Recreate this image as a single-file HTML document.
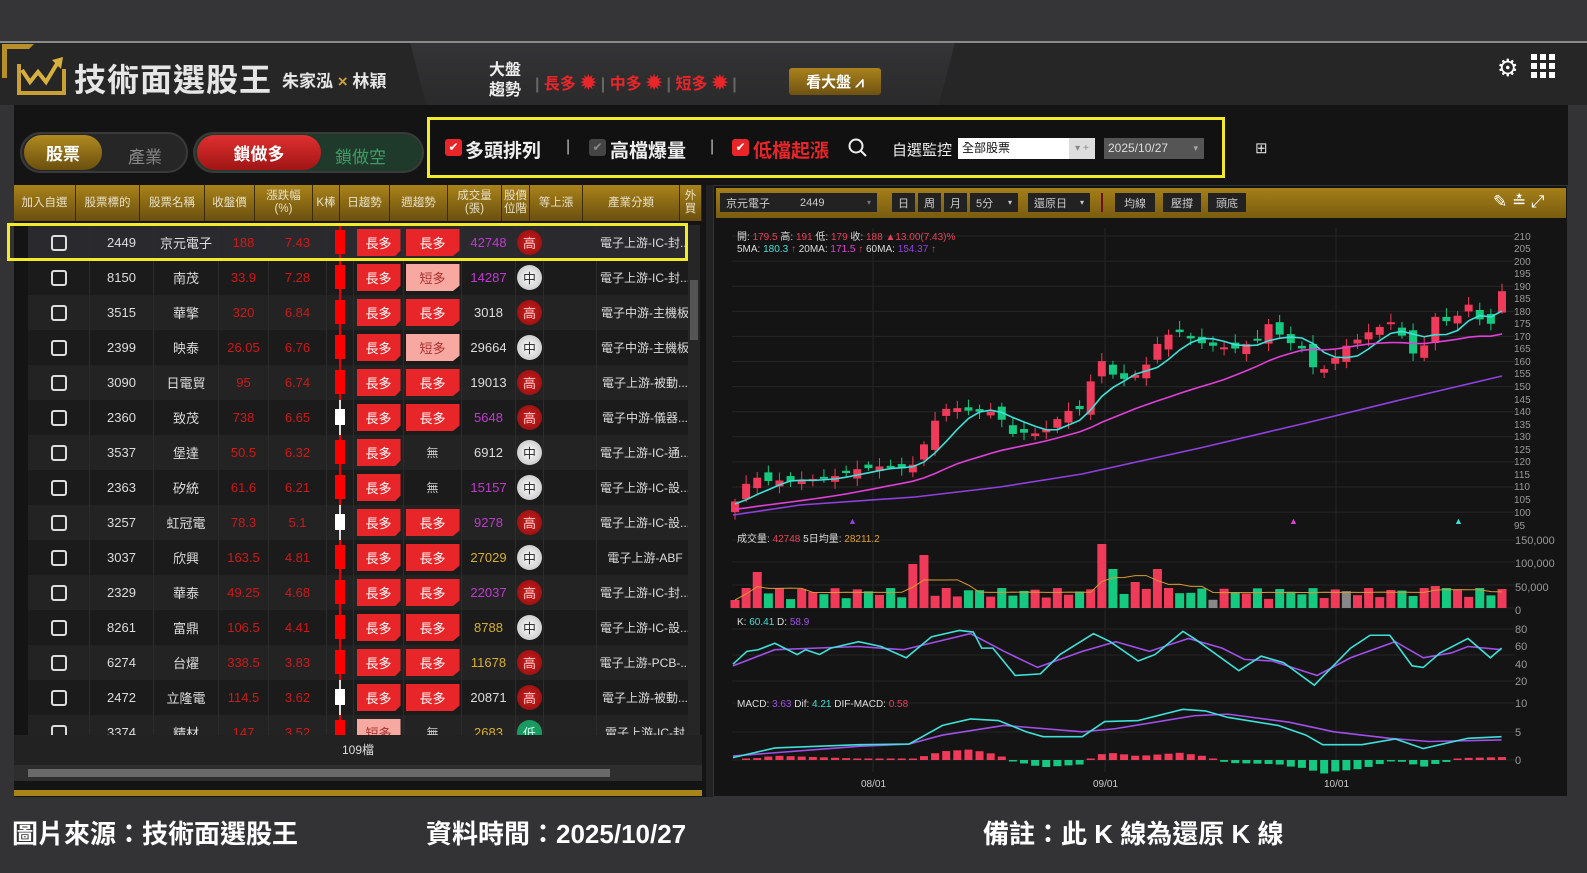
<!DOCTYPE html>
<html><head><meta charset="utf-8"><style>
*{margin:0;padding:0;box-sizing:border-box}
body{width:1587px;height:873px;overflow:hidden;background:#333335;font-family:"Liberation Sans","Noto Sans CJK TC",sans-serif;position:relative;color:#ddd}
.a{position:absolute}
.hc{position:absolute;top:185px;height:36px;background:linear-gradient(#a98218,#6a5010);color:#e8e0c8;font-size:11.5px;display:flex;align-items:center;justify-content:center;text-align:center;line-height:13px;border-right:1px solid #3a2c08}
.row{position:absolute;left:14px;width:674px;height:35px}
.c{position:absolute;top:0;height:35px;display:flex;align-items:center;justify-content:center;font-size:13px;border-right:1px solid #2c2c2c}
.tag{width:44px;height:27px;background:#e8262a;color:#fff;font-size:13px;display:flex;align-items:center;justify-content:center;clip-path:polygon(0 0,100% 0,100% 80%,88% 100%,0 100%)}
.pos{width:25px;height:25px;border-radius:50%;display:flex;align-items:center;justify-content:center;font-size:13px}
.btn{position:absolute;top:193px;height:19px;background:#222;color:#ccc;font-size:11px;display:flex;align-items:center;padding:0 6px}
</style></head><body>
<div class="a" style="left:0;top:0;width:1587px;height:42px;background:#353537"></div>
<div class="a" style="left:0;top:41px;width:1587px;height:2px;background:#8a8a8a"></div>
<div class="a" style="left:0;top:43px;width:1587px;height:62px;background:#262627"></div>
<div class="a" style="left:410px;top:43px;width:545px;height:62px;background:linear-gradient(#343436,#2a2a2b);clip-path:polygon(0 0,100% 0,97% 100%,3% 100%)"></div>
<svg class="a" style="left:0;top:42px" width="75" height="60" viewBox="0 0 75 60">
<path d="M2 36 V2 H34 L29 7 H7 V36 Z" fill="#b8902a"/>
<path d="M19 22 V51 H64 V27" fill="none" stroke="#c9a033" stroke-width="4"/>
<path d="M22 28 L30 40 L38 30 L46 40 L58 20" fill="none" stroke="#d8b040" stroke-width="4"/>
<path d="M52 18 L63 15 L61 27 Z" fill="#d8b040"/>
</svg>
<div class="a" style="left:74px;top:55px;font-size:32px;font-weight:bold;color:#e6e6e6;letter-spacing:1px">技術面選股王</div>
<div class="a" style="left:282px;top:67px;font-size:17px;font-weight:bold;color:#e6e6e6">朱家泓 <span style="color:#c9a033">×</span> 林穎</div>
<div class="a" style="left:489px;top:61px;font-size:16px;font-weight:bold;color:#eee;line-height:20px">大盤<br>趨勢</div>
<div class="a" style="left:535px;top:70px;font-size:16px;color:#e8262a;font-weight:bold;white-space:nowrap">
<span style="color:#666">|</span> 長多 <span style="font-size:19px">✹</span> <span style="color:#666">|</span> 中多 <span style="font-size:19px">✹</span> <span style="color:#666">|</span> 短多 <span style="font-size:19px">✹</span> <span style="color:#666">|</span></div>
<div class="a" style="left:789px;top:68px;width:92px;height:27px;background:linear-gradient(#a9821c,#6f5212);border-radius:3px;color:#fff;font-size:15px;font-weight:bold;display:flex;align-items:center;justify-content:center">看大盤 ⩘</div>
<div class="a" style="left:1497px;top:54px;font-size:24px;color:#fff">⚙</div>
<svg class="a" style="left:1531px;top:54px" width="24" height="24"><g fill="#fff"><rect x="0" y="0" width="6" height="6"/><rect x="9" y="0" width="6" height="6"/><rect x="18" y="0" width="6" height="6"/><rect x="0" y="9" width="6" height="6"/><rect x="9" y="9" width="6" height="6"/><rect x="18" y="9" width="6" height="6"/><rect x="0" y="18" width="6" height="6"/><rect x="9" y="18" width="6" height="6"/><rect x="18" y="18" width="6" height="6"/></g></svg>
<div class="a" style="left:14px;top:105px;width:1554px;height:692px;background:#141414"></div>
<div class="a" style="left:20px;top:132px;width:168px;height:41px;border-radius:21px;background:#262626;border:2px solid #3a3a3a"></div>
<div class="a" style="left:24px;top:135px;width:78px;height:35px;border-radius:18px;background:linear-gradient(#b08a20,#6a4f0e);color:#fff;font-size:17px;font-weight:bold;display:flex;align-items:center;justify-content:center">股票</div>
<div class="a" style="left:128px;top:143px;font-size:17px;color:#888">產業</div>
<div class="a" style="left:193px;top:132px;width:231px;height:41px;border-radius:21px;background:#1f3a2a;border:2px solid #3a3a3a"></div>
<div class="a" style="left:197px;top:135px;width:124px;height:35px;border-radius:18px;background:linear-gradient(#e03030,#a01515);color:#fff;font-size:17px;font-weight:bold;display:flex;align-items:center;justify-content:center">鎖做多</div>
<div class="a" style="left:335px;top:143px;font-size:17px;color:#3f9a68">鎖做空</div>
<div class="a" style="left:427px;top:117px;width:798px;height:61px;border:3px solid #f2ea2a;background:#111"></div>
<div class="a" style="left:445px;top:139px;width:17px;height:17px;background:#e8262a;border-radius:3px;color:#fff;font-size:12px;text-align:center;line-height:17px">✔</div>
<div class="a" style="left:465px;top:136px;font-size:19px;font-weight:bold;color:#eee">多頭排列</div>
<div class="a" style="left:566px;top:138px;font-size:16px;color:#bbb">|</div>
<div class="a" style="left:589px;top:139px;width:17px;height:17px;background:#444;border-radius:3px;color:#888;font-size:12px;text-align:center;line-height:17px">✔</div>
<div class="a" style="left:610px;top:136px;font-size:19px;font-weight:bold;color:#eee">高檔爆量</div>
<div class="a" style="left:710px;top:138px;font-size:16px;color:#bbb">|</div>
<div class="a" style="left:732px;top:139px;width:17px;height:17px;background:#e8262a;border-radius:3px;color:#fff;font-size:12px;text-align:center;line-height:17px">✔</div>
<div class="a" style="left:753px;top:136px;font-size:19px;font-weight:bold;color:#e8262a">低檔起漲</div>
<svg class="a" style="left:848px;top:138px" width="20" height="20"><circle cx="8" cy="8" r="6.5" fill="none" stroke="#eee" stroke-width="2"/><path d="M13 13 L18 18" stroke="#eee" stroke-width="2"/></svg>
<div class="a" style="left:892px;top:139px;font-size:15px;color:#eee">自選監控</div>
<div class="a" style="left:958px;top:138px;width:137px;height:21px;background:#fff;color:#111;font-size:12px;padding-left:4px;line-height:21px">全部股票<span style="position:absolute;right:0;top:0;width:26px;height:21px;background:#ddd;color:#888;font-size:10px;text-align:center">▾ +</span></div>
<div class="a" style="left:1104px;top:138px;width:100px;height:21px;background:#555;color:#ddd;font-size:12px;padding-left:4px;line-height:21px">2025/10/27<span style="position:absolute;right:6px;font-size:9px;color:#aaa">▾</span></div>
<div class="a" style="left:1255px;top:139px;font-size:15px;color:#ddd">⊞</div>
<div class="hc" style="left:14px;width:62px">加入自選</div>
<div class="hc" style="left:76px;width:64px">股票標的</div>
<div class="hc" style="left:140px;width:65px">股票名稱</div>
<div class="hc" style="left:205px;width:50px">收盤價</div>
<div class="hc" style="left:255px;width:58px">漲跌幅<br>(%)</div>
<div class="hc" style="left:313px;width:27px">K棒</div>
<div class="hc" style="left:340px;width:50px">日趨勢</div>
<div class="hc" style="left:390px;width:58px">週趨勢</div>
<div class="hc" style="left:448px;width:54px">成交量<br>(張)</div>
<div class="hc" style="left:502px;width:28px">股價<br>位階</div>
<div class="hc" style="left:530px;width:53px">等上漲</div>
<div class="hc" style="left:583px;width:97px">產業分類</div>
<div class="hc" style="left:680px;width:22px">外<br>買</div>
<div class="a" style="left:14px;top:221px;width:674px;height:514px;overflow:hidden" id="tb"></div>
<div class="a" style="left:688px;top:225px;width:12px;height:510px;background:#262626"></div>
<div class="a" style="left:690px;top:280px;width:8px;height:60px;background:#555"></div>
<div class="a" style="left:14px;top:735px;width:688px;height:30px;background:#222;color:#ddd;font-size:12px;text-align:center;line-height:30px">109檔</div>
<div class="a" style="left:14px;top:765px;width:688px;height:16px;background:#2e2e2e"></div>
<div class="a" style="left:28px;top:769px;width:582px;height:8px;background:#6a6a6a"></div>
<div class="a" style="left:14px;top:790px;width:688px;height:6px;background:#a88518"></div>
<div class="a" style="left:7px;top:223px;width:681px;height:38px;border:3px solid #f2ea2a"></div>
<div class="a" style="left:706px;top:185px;width:7px;height:612px;background:#222"></div>
<div class="a" style="left:713px;top:185px;width:855px;height:612px;background:#141414;border:1px solid #333"></div>
<div class="a" style="left:716px;top:188px;width:850px;height:30px;background:linear-gradient(#a47f18,#7a5c10)"></div>
<div class="btn" style="left:720px;width:157px">京元電子<span style="margin-left:30px">2449</span><span style="margin-left:auto;color:#777;font-size:8px">▾</span></div>
<div class="btn" style="left:892px">日</div>
<div class="btn" style="left:918px">周</div>
<div class="btn" style="left:944px">月</div>
<div class="btn" style="left:970px;width:48px">5分 <span style="margin-left:auto;font-size:8px">▾</span></div>
<div class="btn" style="left:1028px;width:62px">還原日 <span style="margin-left:auto;font-size:8px">▾</span></div>
<div class="a" style="left:1101px;top:193px;width:2px;height:19px;background:#6a1010"></div>
<div class="btn" style="left:1115px;width:40px;justify-content:center">均線</div>
<div class="btn" style="left:1163px;width:38px;justify-content:center">壓撐</div>
<div class="btn" style="left:1208px;width:38px;justify-content:center">頭底</div>
<div class="a" style="left:1493px;top:192px;font-size:17px;color:#fff">✎ ≛ ⤢</div>
<svg class="a" style="left:714px;top:219px" width="853" height="577" id="ch" font-family="Liberation Sans, Noto Sans CJK TC, sans-serif"></svg>
<div class="a" style="left:12px;top:814px;font-size:26px;font-weight:bold;color:#fff">圖片來源：技術面選股王</div>
<div class="a" style="left:426px;top:814px;font-size:26px;font-weight:bold;color:#fff">資料時間：2025/10/27</div>
<div class="a" style="left:983px;top:814px;font-size:26px;font-weight:bold;color:#fff">備註：此 K 線為還原 K 線</div>
<script>
var rows=[
["2449","京元電子","188","7.43","長多","長多","42748","#c03ad0","高","電子上游-IC-封...",0],
["8150","南茂","33.9","7.28","長多","短多","14287","#c03ad0","中","電子上游-IC-封...",0],
["3515","華擎","320","6.84","長多","長多","3018","#ddd","高","電子中游-主機板",0],
["2399","映泰","26.05","6.76","長多","短多","29664","#ddd","中","電子中游-主機板",0],
["3090","日電貿","95","6.74","長多","長多","19013","#ddd","高","電子上游-被動...",0],
["2360","致茂","738","6.65","長多","長多","5648","#c03ad0","高","電子中游-儀器...",1],
["3537","堡達","50.5","6.32","長多","無","6912","#ddd","中","電子上游-IC-通...",0],
["2363","矽統","61.6","6.21","長多","無","15157","#c03ad0","中","電子上游-IC-設...",0],
["3257","虹冠電","78.3","5.1","長多","長多","9278","#c03ad0","高","電子上游-IC-設...",1],
["3037","欣興","163.5","4.81","長多","長多","27029","#d8b030","中","電子上游-ABF",0],
["2329","華泰","49.25","4.68","長多","長多","22037","#c03ad0","高","電子上游-IC-封...",0],
["8261","富鼎","106.5","4.41","長多","長多","8788","#d8b030","中","電子上游-IC-設...",0],
["6274","台燿","338.5","3.83","長多","長多","11678","#d8b030","高","電子上游-PCB-...",0],
["2472","立隆電","114.5","3.62","長多","長多","20871","#ddd","高","電子上游-被動...",1],
["3374","精材","147","3.52","短多","無","2683","#d8b030","低","電子上游-IC-封",0]];
var cols=[[0,62],[62,64],[126,65],[191,50],[241,58],[299,27],[326,50],[376,58],[434,54],[488,28],[516,53],[569,97],[666,8]];
var h="";
rows.forEach(function(r,i){
 var bg=i==0?"#2a2a2e":(i%2?"#1b1b1b":"#232323");
 h+='<div class="row" style="top:'+(4+i*35)+'px;background:'+bg+'">';
 function cell(k,inner,st){h+='<div class="c" style="left:'+cols[k][0]+'px;width:'+cols[k][1]+'px;'+(st||'')+'">'+inner+'</div>';}
 cell(0,'<div style="width:16px;height:16px;border:2px solid #ddd;border-radius:3px"></div>');
 cell(1,r[0],'color:#ddd');cell(2,r[1],'color:#ddd');
 cell(3,r[2],'color:#d01818');cell(4,r[3],'color:#d01818');
 var kb=r[10]?'<div style="position:relative;width:10px;height:35px"><div style="position:absolute;left:4px;top:0;width:2px;height:35px;background:#ddd"></div><div style="position:absolute;left:0;top:9px;width:10px;height:16px;background:#fff"></div></div>':'<div style="position:relative;width:10px;height:35px"><div style="position:absolute;left:4px;top:0;width:2px;height:35px;background:#e00"></div><div style="position:absolute;left:0;top:5px;width:10px;height:24px;background:#f00"></div></div>';
 cell(5,kb);
 cell(6,'<div class="tag"'+(r[4]=="短多"?' style="background:#f7a8a0;color:#a33"':'')+'>'+r[4]+'</div>');
 cell(7,r[5]=="無"?'<span style="color:#ccc;font-size:12px">無</span>':'<div class="tag" style="width:54px;'+(r[5]=="短多"?'background:#f7a8a0;color:#a33':'')+'">'+r[5]+'</div>');
 cell(8,r[6],'color:'+r[7]);
 var pc=r[8]=="高"?"background:radial-gradient(#d02020,#8a0c0c);color:#fcc":r[8]=="中"?"background:radial-gradient(#fff,#bbb);color:#333":"background:#1a9a60;color:#cfe";
 cell(9,'<div class="pos" style="'+pc+'">'+r[8]+'</div>');
 cell(10,'');cell(11,r[9],'color:#ddd;font-size:12px');cell(12,'');
 h+='</div>';
});
document.getElementById('tb').innerHTML=h;
var OX=714,OY=219,s="";
function X(x){return x-OX}function Y(y){return y-OY}
function py(p){return 236+(210-p)*2.51}
for(var p=100;p<=210;p+=10){s+='<line x1="'+X(732)+'" x2="'+X(1515)+'" y1="'+Y(py(p))+'" y2="'+Y(py(p))+'" stroke="#262626"/>';}
[873,1105,1336].forEach(function(x){s+='<line x1="'+X(x)+'" x2="'+X(x)+'" y1="'+Y(228)+'" y2="'+Y(772)+'" stroke="#262626"/>';});
[608,585,562,540,629,655,681,760,732,703].forEach(function(a){s+='<line x1="'+X(732)+'" x2="'+X(1515)+'" y1="'+Y(a)+'" y2="'+Y(a)+'" stroke="#232323"/>';});
[[210,236],[205,248],[200,261],[195,273],[190,286],[185,298],[180,311],[175,323],[170,336],[165,348],[160,361],[155,373],[150,386],[145,399],[140,411],[135,424],[130,436],[125,449],[120,461],[115,474],[110,486],[105,499],[100,512],[95,525]].forEach(function(a){s+='<text x="'+X(1514)+'" y="'+(Y(a[1])+4)+'" font-size="10" fill="#999">'+a[0]+'</text>';});
[["150,000",540],["100,000",563],["50,000",587],["0",610],["80",629],["60",646],["40",664],["20",681],["10",703],["5",732],["0",760]].forEach(function(a){s+='<text x="'+X(1515)+'" y="'+(Y(a[1])+4)+'" font-size="11" fill="#999">'+a[0]+'</text>';});
[["08/01",873],["09/01",1105],["10/01",1336]].forEach(function(a){s+='<text x="'+(X(a[1])-12)+'" y="'+Y(787)+'" font-size="10" fill="#ccc">'+a[0]+'</text>';});
var kp=[[733,103],[741,108],[752,115],[764,112],[775,113],[786,112],[808,113],[831,114],[842,115],[864,118],[873,117],[884,119],[906,117],[917,120],[929,132],[940,140],[951,142],[973,140],[993,140],[1004,136],[1015,130],[1026,132],[1040,131],[1049,134],[1060,138],[1071,141],[1082,141],[1093,155],[1105,162],[1116,152],[1138,155],[1149,160],[1161,170],[1172,171],[1183,172],[1194,168],[1205,167],[1216,166],[1239,165],[1250,168],[1261,169],[1270,176],[1281,170],[1292,167],[1303,165],[1314,157],[1325,157],[1348,167],[1359,169],[1370,172],[1381,174],[1393,176],[1401,171],[1412,163],[1423,165],[1434,178],[1446,176],[1457,178],[1468,183],[1479,177],[1490,174],[1502,188]];
function interp(arr,x){if(x<=arr[0][0])return arr[0][1];for(var i=1;i<arr.length;i++){if(x<=arr[i][0]){var t=(x-arr[i-1][0])/(arr[i][0]-arr[i-1][0]);return arr[i-1][1]+t*(arr[i][1]-arr[i-1][1]);}}return arr[arr.length-1][1];}
var N=70,xs=[],cl=[],op=[];
for(var i=0;i<N;i++){var x=735+i*(1502-735)/(N-1);xs.push(x);cl.push(interp(kp,x));}
for(var i=0;i<N;i++){op.push(i?cl[i-1]+Math.sin(i*2.7)*2.2:100);}
op[N-1]=179.5;cl[N-1]=188;
var upC="#f03a5a",dnC="#16c980";
for(var i=0;i<N;i++){var o=op[i],c=cl[i],up=c>=o,hi=Math.max(o,c)+1+Math.abs(Math.sin(i*1.3))*2.5,lo=Math.min(o,c)-1-Math.abs(Math.cos(i*1.7))*2;if(i==N-1){hi=191;lo=179;}
 var col=up?upC:dnC,t=py(Math.max(o,c)),b=py(Math.min(o,c));if(b-t<2)b=t+2;
 s+='<line x1="'+X(xs[i])+'" x2="'+X(xs[i])+'" y1="'+Y(py(hi))+'" y2="'+Y(py(lo))+'" stroke="'+col+'"/>';
 s+='<rect x="'+(X(xs[i])-4)+'" y="'+Y(t)+'" width="8" height="'+(b-t)+'" fill="'+col+'"/>';}
function ma(n,pad){var pts=[];for(var i=0;i<N;i++){var sm=0;for(var j=i-n+1;j<=i;j++)sm+=j<0?pad:cl[j];pts.push(X(xs[i])+","+Y(py(sm/n)));}return pts.join(" ");}
s+='<polyline points="'+ma(5,103)+'" fill="none" stroke="#3ee0d8" stroke-width="1.6"/>';
s+='<polyline points="'+ma(20,101)+'" fill="none" stroke="#e040d8" stroke-width="1.6"/>';
var m60=[[733,515],[800,505],[915,497],[1000,487],[1082,474],[1200,448],[1306,423],[1400,400],[1502,376]];
s+='<polyline points="'+m60.map(function(a){return X(a[0])+","+Y(a[1])}).join(" ")+'" fill="none" stroke="#9040e0" stroke-width="1.6"/>';
s+='<text x="'+X(737)+'" y="'+Y(240)+'" font-size="10" fill="#ddd">開: <tspan fill="#e8405a">179.5</tspan>  高: <tspan fill="#e8405a">191</tspan>  低: <tspan fill="#e8405a">179</tspan>  收: <tspan fill="#e8405a">188</tspan>  <tspan fill="#e8405a">▲13.00(7.43)%</tspan></text>';
s+='<text x="'+X(737)+'" y="'+Y(252)+'" font-size="10" fill="#ddd">5MA: <tspan fill="#3ee0d8">180.3</tspan>  <tspan fill="#e8405a">↑</tspan>  20MA: <tspan fill="#e040d8">171.5</tspan>  <tspan fill="#e8405a">↑</tspan>  60MA: <tspan fill="#9040e0">154.37</tspan>  <tspan fill="#e8405a">↑</tspan></text>';
s+='<text x="'+X(848)+'" y="'+Y(524)+'" font-size="9" fill="#9040e0">▲</text><text x="'+X(1289)+'" y="'+Y(524)+'" font-size="9" fill="#e040d8">▲</text><text x="'+X(1454)+'" y="'+Y(524)+'" font-size="9" fill="#3ee0d8">▲</text>';
s+='<text x="'+X(737)+'" y="'+Y(542)+'" font-size="10" fill="#ddd">成交量: <tspan fill="#e8405a">42748</tspan>  5日均量: <tspan fill="#e0a030">28211.2</tspan></text>';
var vh=[],base=608;
for(var i=0;i<N;i++){vh.push(8+Math.abs(Math.sin(i*1.9))*12);}
function setv(x,h){var k=Math.round((x-735)/((1502-735)/(N-1)));if(k>=0&&k<N)vh[k]=h;}
setv(741,20);setv(752,36);setv(917,44);setv(929,53);setv(1105,64);setv(1116,39);setv(1139,26);setv(1155,39);setv(1166,20);setv(1434,22);setv(1446,20);setv(1502,19);
var avg=[];
for(var i=0;i<N;i++){var up=cl[i]>=op[i];var col=(i==43||i==55)?"#888":(up?upC:dnC);s+='<rect x="'+(X(xs[i])-4.5)+'" y="'+Y(base-vh[i])+'" width="9" height="'+vh[i]+'" fill="'+col+'"/>';var sm=0;for(var j=Math.max(0,i-4);j<=i;j++)sm+=vh[j];avg.push(X(xs[i])+","+Y(base-sm/Math.min(5,i+1)));}
s+='<polyline points="'+avg.join(" ")+'" fill="none" stroke="#d89a30" stroke-width="1"/>';
function mp(a,by){return a.map(function(p){return [691+p[0]*0.559,by+p[1]*0.322]});}
function pl(a,c){return '<polyline points="'+a.map(function(p){return X(p[0])+","+Y(p[1])}).join(" ")+'" fill="none" stroke="'+c+'" stroke-width="1.6"/>';}
var K=mp([[75,510],[100,470],[120,465],[150,445],[190,480],[205,465],[230,480],[250,460],[300,440],[340,455],[385,490],[430,425],[480,405],[505,410],[520,460],[540,460],[580,545],[625,540],[660,480],[720,415],[750,440],[800,500],[830,480],[880,408],[900,430],[980,530],[1020,485],[1060,505],[1115,575],[1180,460],[1215,420],[1250,420],[1290,515],[1310,520],[1340,475],[1390,430],[1430,490],[1450,460]],500);
var D=mp([[75,515],[150,465],[300,455],[380,465],[500,415],[560,470],[620,520],[700,470],[760,440],[820,470],[890,430],[950,460],[990,495],[1040,500],[1120,545],[1180,490],[1260,440],[1310,490],[1360,475],[1390,455],[1450,465]],500);
s+=pl(D,"#a050e8")+pl(K,"#3ee0d8");
s+='<text x="'+X(737)+'" y="'+Y(625)+'" font-size="10" fill="#ddd">K: <tspan fill="#3ee0d8">60.41</tspan>  D: <tspan fill="#a050e8">58.9</tspan></text>';
var MC=mp([[75,800],[150,770],[300,760],[390,758],[450,700],[500,680],[550,685],[600,720],[630,735],[700,735],[740,688],[800,685],[880,650],[920,655],[960,675],[1050,700],[1100,730],[1130,760],[1200,760],[1260,742],[1310,772],[1390,740],[1450,735]],500);
var MP=mp([[75,795],[300,765],[390,758],[450,730],[560,700],[700,720],[760,710],[900,670],[960,665],[1070,690],[1150,720],[1250,740],[1320,750],[1450,745]],500);
var zero=760;
for(var i=1;i<N;i++){var d=(interp(MP,xs[i])-interp(MC,xs[i]))*0.9;var col=d>0?upC:dnC;var h2=Math.max(1.5,Math.abs(d));s+='<rect x="'+(X(xs[i])-4)+'" y="'+Y(d>0?zero-h2:zero)+'" width="8" height="'+h2+'" fill="'+col+'"/>';}
s+=pl(MP,"#a050e8")+pl(MC,"#3ee0d8");
s+='<text x="'+X(737)+'" y="'+Y(707)+'" font-size="10" fill="#ddd">MACD: <tspan fill="#a050e8">3.63</tspan>  Dif: <tspan fill="#3ee0d8">4.21</tspan>  DIF-MACD: <tspan fill="#e8405a">0.58</tspan></text>';
document.getElementById('ch').innerHTML=s;
</script>
</body></html>
